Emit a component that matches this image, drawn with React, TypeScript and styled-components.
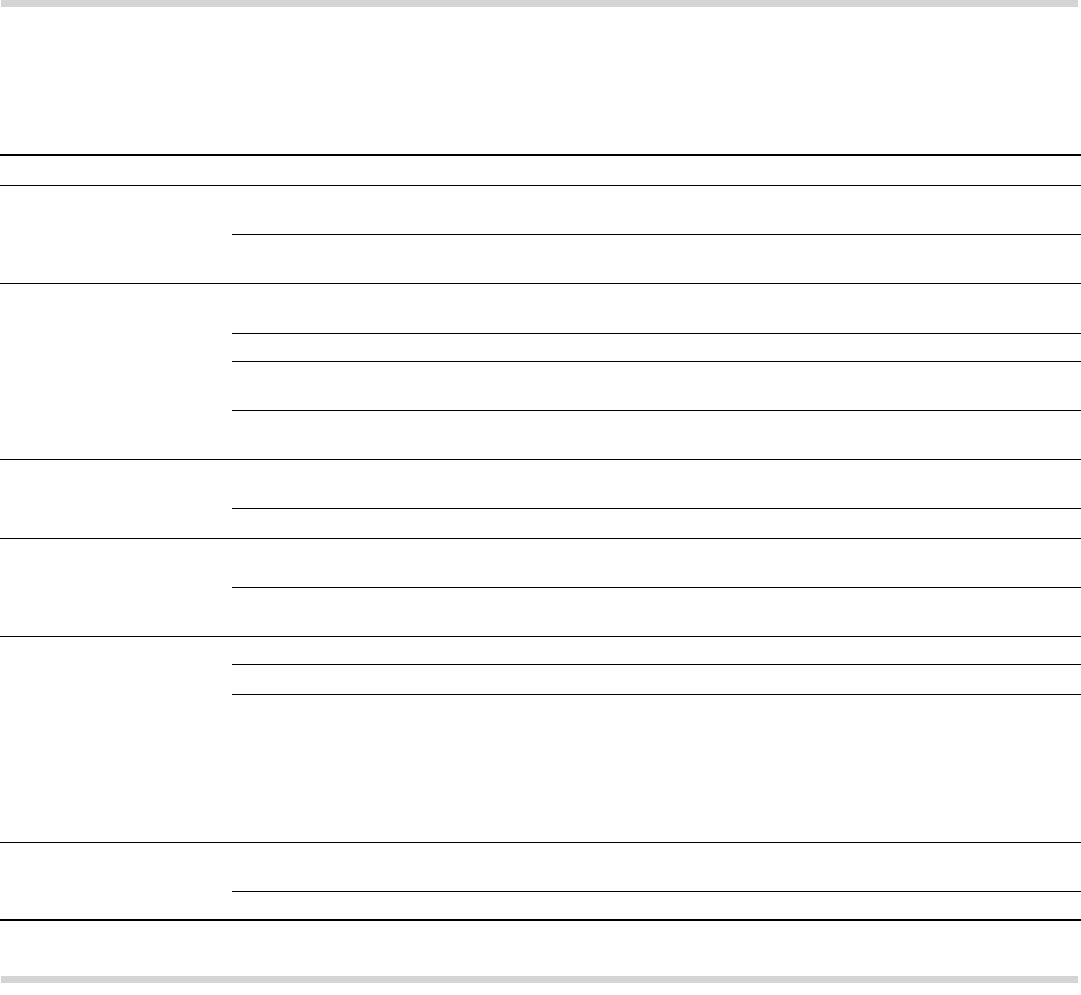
import styled, { createGlobalStyle } from 'styled-components'

const groups: number[][] = [
    [48, 48],
    [49, 27, 48, 48],
    [48, 29],
    [48, 48],
    [27, 29, 147],
    [48, 27],
]

const App = () => {
    return (
        <Page>
            <GlobalStyle />
            <Rule />
            <Table>
                <HeadRow />
                {
                    groups.map((rows, i) => (
                        <Group key={i}>
                            <GroupCell />
                            <SubList>
                                {
                                    rows.map((h, j) => (
                                        <SubRow key={j} h={h} />
                                    ))
                                }
                            </SubList>
                        </Group>
                    ))
                }
            </Table>
            <Rule />
        </Page>
    )
}

export default App

const GlobalStyle = createGlobalStyle`
body{
    margin: 0;
    background: #ffffff;
    font-family: "Liberation Sans", Arial, sans-serif;
}
`

const Page = styled.div`
width: 1081px;
display: flex;
flex-direction: column;
`

const Rule = styled.div`
height: 7px;
margin: 0 3px 0 1px;
background-color: #d4d4d4;
`

const Table = styled.div`
margin-top: 147px;
margin-bottom: 55px;
border-top: 2px solid #000;
border-bottom: 2px solid #000;
display: flex;
flex-direction: column;
`

const HeadRow = styled.div`
height: 29px;
`

const Group = styled.div`
display: grid;
grid-template-columns: 232px 1fr;
border-top: 1px solid #000;
`

const GroupCell = styled.div``

const SubList = styled.div`
display: flex;
flex-direction: column;
`

const SubRow = styled.div<{ h: number }>`
height: ${({ h }) => h}px;

& + &{
    border-top: 1px solid #000;
}
`
